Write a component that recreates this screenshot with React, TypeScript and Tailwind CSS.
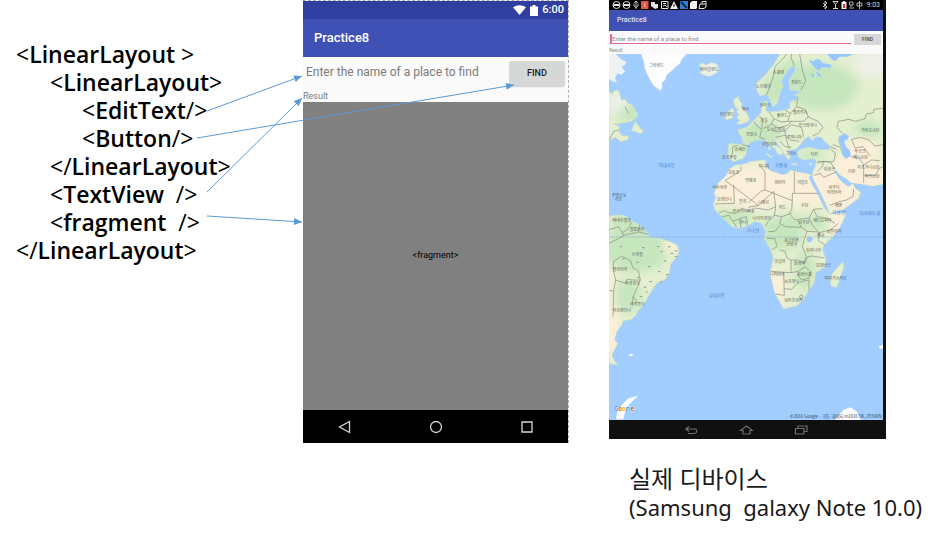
import type { ReactNode } from "react";

const land = {
  eurasia:
    "M370 285L376 280L415 285L413 268L398 240L425 232L445 212L460 198L470 185L468 160L485 152L490 166L480 180L492 186L520 184L540 180L555 174L554 158L565 150L572 156L578 142L570 134L595 126L576 122L555 120L552 94L563 72L572 60L566 45L550 60L538 76L528 95L535 108L524 130L518 158L504 170L495 150L488 135L478 134L465 138L455 120L455 98L480 75L505 45L525 12L834 12L834 402L805 408L765 401L738 398L727 388L705 374L694 360L688 364L700 384L715 400L730 411L744 402L750 415L767 427L760 445L740 460L715 478L674 490L666 470L655 445L640 415L627 390L622 376L630 352L635 330L620 325L596 331L580 320L576 305L590 297L615 292L645 300L675 298L675 288L660 275L650 262L632 260L622 272L612 258L598 268L586 284L575 296L560 300L545 302L556 320L550 330L536 310L524 290L510 275L498 262L504 274L516 288L536 302L530 316L518 312L510 296L494 286L480 270L455 270L438 276L424 290L424 312L412 326L397 331L385 335L370 322Z",
  africa:
    "M390 345L410 344L436 335L470 330L483 332L480 350L496 362L516 369L532 375L546 372L556 361L572 365L605 371L618 376L610 382L620 402L634 426L646 450L656 470L665 484L676 493L720 488L722 494L705 530L684 560L667 575L655 590L653 600L663 630L660 650L631 670L627 700L606 730L590 755L574 768L535 776L527 760L510 730L495 670L505 625L495 595L477 565L482 545L470 520L450 514L430 526L405 535L380 530L350 500L330 480L325 465L333 440L328 430L340 400L365 376L372 360Z",
  southAmerica:
    "M12 498L40 495L60 497L75 510L100 522L120 540L130 555L135 563L160 565L195 575L217 586L222 605L215 622L197 642L193 670L180 690L155 700L132 735L116 765L100 780L92 797L80 808L55 812L50 825L35 845L28 870L38 880L28 900L20 915L30 935L38 945L12 940Z",
  labrador:
    "M12 125L20 132L28 122L40 120L45 135L50 152L60 147L68 160L82 165L90 180L98 192L92 205L75 215L50 220L25 222L45 230L40 242L52 258L68 257L72 266L50 276L30 262L12 272Z",
  newfoundland: "M80 242L90 214L100 227L116 246L105 251L92 245Z",
  britain:
    "M385 150L400 139L402 150L412 160L408 170L418 180L428 195L433 205L430 215L405 223L395 220L405 210L395 205L402 195L395 185L400 178L390 170Z",
  ireland: "M372 182L382 174L388 185L385 202L365 210L357 200Z",
  iceland: "M283 45L290 39L303 46L320 38L335 42L341 55L335 68L315 79L297 76L285 68L295 60Z",
  madagascar: "M713 635L717 650L695 712L678 708L676 692L682 670Z",
};

const landOutline = Object.values(land).join("");

const ice = [
  "M108 12L118 38L118 50L125 70L133 85L140 98L147 108L167 122L172 112L170 100L180 90L185 75L203 60L215 48L225 40L230 28L245 12Z",
  "M33 1108L38 1080L55 1060L70 1045L100 1037L84 1052L70 1066L60 1085L55 1108Z",
  "M690 1110L705 1092L715 1080L735 1072L755 1084L768 1110Z",
  "M70 913L82 911L84 917L74 919Z",
  "M822 888L834 885L834 896L824 896Z",
];

const water = [
  "M610 28L622 34L640 26L655 40L680 44L676 54L652 52L642 62L626 50Z",
  "M665 12L745 12L728 20L704 20L690 34L680 28Z",
  "M632 64L644 70L650 82L640 80Z",
  "M616 68L628 76L622 84Z",
  "M700 262L718 250L732 258L728 268L718 272L722 290L734 300L738 318L722 326L710 312L712 296L702 282Z",
  "M606 562L618 560L624 568L614 578L606 574Z",
];

const borders =
  "M398 287L384 290L380 325M413 284L436 290M446 214L456 228L470 238L464 262L480 268M462 200L474 206L470 236M492 186L506 206L500 222L474 236M506 206L530 216L548 214L556 190L540 180M500 222L520 234L548 226L560 214L548 214M556 190L575 170L600 178L610 200L596 214L560 214M575 170L578 140M606 200L640 214L654 232L640 250L622 258M560 224L590 232L596 262M500 240L520 246L540 242L560 224M512 262L540 256L556 270L582 274M540 242L544 266L552 296M526 274L540 290L560 292M485 135L494 110L505 80L510 50L530 30L545 12M568 46L558 24L560 12M584 12L592 60L602 92L588 120M678 298L692 310L686 334L676 336L640 334M636 338L656 334L652 350L636 366M656 334L676 336L690 358M684 284L706 292L710 304M676 290L694 298M834 175L806 178L806 188L784 192L780 206L752 214L732 208L700 214L696 232L712 250M740 268L766 262L792 270L810 288L834 284M740 268L750 294L774 290L796 318M738 320L764 326L776 344L776 398M776 344L800 330L824 332M776 376L812 376L822 356L834 350M626 376L646 370L656 382L694 366M674 466L700 456L724 450L744 440L746 416M568 366L568 430L640 430M568 430L562 430L562 452L480 420L480 366L470 352M480 420L468 424L430 458M408 350L408 362L360 392M360 392L386 410L460 466L430 472M386 404L388 460L330 462M460 466L506 424L512 470L490 480L450 474L430 484L410 474L394 490L370 488M562 452L560 480L552 490L570 510L612 504L626 478L652 476M512 470L508 496L490 514L480 530M508 496L530 500L560 490M530 500L524 520L540 530L590 532L578 512M612 504L624 528L642 548L676 540L700 520M626 478L636 500L664 504L690 520M590 532L606 544L600 562L592 590L604 620L596 640M606 544L640 546M642 548L640 572L662 586M490 545L510 544L524 526M485 565L510 566L516 590L500 600M524 600L540 604L546 624L558 630M558 630L558 668L496 664M558 630L580 630L600 640L606 622L622 618L658 624M558 668L580 664L600 650L616 664L612 684L590 690L576 672M536 668L538 736L512 732M538 716L560 718L576 700L592 694L612 690L612 724M584 738L592 734L594 744L586 748ZM352 500L372 496L384 514L394 530M384 514L404 506L408 534M404 506L424 500L428 526M342 488L362 482L370 490M12 540L40 530L52 548L70 536L80 516M52 548L56 556L100 546L104 524M100 546L128 552M12 580L40 566L56 556M26 634L50 618L76 632L84 654L100 662L106 690L90 728L84 740L100 760M26 634L24 656L32 690L26 722L24 800M32 690L62 700L66 688L84 690L106 690M84 740L82 766M12 272L26 244L40 240M60 170L70 190";

type MapLabel = [text: string, x: number, y: number];

const places: MapLabel[] = [
  ["그린란드", 155, 52], ["아이슬란드", 313, 63], ["영국", 421, 182], ["아일랜드", 366, 199],
  ["프랑스", 440, 259], ["스페인", 405, 303], ["포르투갈", 373, 326], ["모로코", 386, 372],
  ["서사하라", 344, 416], ["모리타니", 358, 453], ["말리", 413, 460], ["알제리", 437, 395],
  ["부르키나파소", 416, 488], ["푸에르토", 42, 440], ["리코", 40, 454], ["베네수엘라", 50, 515],
  ["가나", 414, 522], ["스웨덴", 520, 71], ["노르웨이", 475, 114], ["핀란드", 575, 103],
  ["덴마크", 480, 170], ["독일", 477, 215], ["폴란드", 532, 202], ["벨라루스", 585, 192],
  ["우크라이나", 608, 232], ["오스트리아", 512, 243], ["루마니아", 568, 266], ["이탈리아", 493, 287],
  ["그리스", 558, 315], ["터키", 628, 319], ["카자흐스탄", 796, 245], ["투르크", 765, 310],
  ["메니스탄", 767, 326], ["이란", 740, 368], ["이라크", 673, 362], ["아프가니스탄", 790, 356],
  ["파키스탄", 802, 383], ["튀니지", 477, 353], ["리비아", 524, 402], ["이집트", 593, 402],
  ["사우디", 687, 418], ["아라비아", 687, 432], ["니제르", 476, 462], ["차드", 532, 477],
  ["수단", 599, 470], ["예멘", 700, 472], ["나이지리아", 470, 510], ["에티오피아", 652, 515],
  ["남수단", 597, 523], ["소말리아", 687, 550], ["케냐", 646, 562], ["콩고민주", 560, 575],
  ["공화국", 560, 589], ["탄자니아", 626, 605], ["앙골라", 525, 640], ["잠비아", 583, 645],
  ["모잠비크", 655, 651], ["짐바브웨", 598, 679], ["나미비아", 517, 679], ["보츠와나", 560, 700],
  ["마다가스카르", 692, 691], ["남아프리카", 565, 755], ["콜롬비아", 96, 543], ["브라질", 97, 617],
  ["볼리비아", 45, 664], ["파라과이", 82, 705], ["우루과이", 97, 768], ["아르헨티나", 50, 785],
];

const seas: MapLabel[] = [
  ["북대서양", 185, 351], ["남대서양", 335, 741], ["지중해", 528, 352],
  ["아덴 만", 702, 492], ["아라비아 해", 794, 495], ["기니 만", 443, 546],
];

const towns = [
  [47, 590], [115, 593], [160, 590], [193, 590], [97, 637], [133, 650], [163, 665],
  [137, 695], [180, 633], [201, 610], [187, 674], [120, 712], [170, 605], [213, 603],
  [213, 620], [108, 740], [55, 626], [168, 696], [126, 726], [100, 682], [18, 722],
];

const forests = [
  [650, 110, 110, 70], [560, 90, 50, 60], [70, 190, 40, 30], [500, 120, 25, 50],
  [90, 600, 100, 70], [530, 560, 60, 40], [470, 250, 60, 40], [560, 520, 90, 22],
  [385, 505, 60, 24], [790, 240, 40, 30], [60, 740, 50, 50], [600, 660, 30, 60],
  [70, 520, 60, 30], [400, 290, 30, 20], [620, 315, 40, 14], [640, 520, 30, 24],
];

const deserts = [
  [450, 410, 150, 62], [600, 410, 90, 60], [700, 420, 70, 55], [740, 360, 60, 50],
  [800, 380, 50, 40], [770, 300, 50, 40], [700, 510, 30, 40], [516, 710, 22, 50],
  [16, 830, 26, 90], [14, 700, 18, 60], [196, 590, 24, 18], [365, 400, 50, 50],
];

function WorldMap() {
  return (
    <svg
      viewBox="12 12 822 1098"
      preserveAspectRatio="none"
      className="h-[366px] w-full bg-[#a2cdff] font-['Noto_Sans_CJK_KR',sans-serif]"
      role="img"
      aria-label="World map"
    >
      <defs>
        <clipPath id="land"><path d={landOutline} /></clipPath>
        <filter id="soft" x="-30%" y="-30%" width="160%" height="160%"><feGaussianBlur stdDeviation="12" /></filter>
      </defs>
      <path d="M12 12L32 12L48 28L64 35L60 45L50 50L60 65L48 75L38 70L30 85L36 100L12 88Z" fill="#eef2f2" />
      <path d={landOutline} fill="#e4efd0" stroke="#cfdcc0" strokeWidth="2" />
      <g clipPath="url(#land)">
        <g filter="url(#soft)">
          {forests.map(([x, y, rx, ry]) => (
            <ellipse key={`${x}-${y}`} cx={x} cy={y} rx={rx} ry={ry} fill="#c6e6bd" />
          ))}
          {deserts.map(([x, y, rx, ry]) => (
            <ellipse key={`${x}-${y}`} cx={x} cy={y} rx={rx} ry={ry} fill="#fcefd9" />
          ))}
          <ellipse cx="810" cy="40" rx="60" ry="40" fill="#eef0ea" />
          <ellipse cx="312" cy="58" rx="36" ry="26" fill="#edf1e8" />
          <ellipse cx="30" cy="160" rx="34" ry="30" fill="#eaf0e6" />
        </g>
      </g>
      {ice.map((d) => <path key={d} d={d} fill="#fdfdfd" />)}
      {water.map((d) => <path key={d} d={d} fill="#98c8fd" />)}
      <path d="M490 288L494 300M484 310L500 322M560 342L576 344M612 344L622 340" stroke="#dcebc6" strokeWidth="5" />
      <path d={borders} fill="none" stroke="#8d8f86" strokeWidth="2.5" strokeLinejoin="round" opacity=".85" />
      <path d="M12 561H834" stroke="#8098c4" strokeWidth="2" strokeDasharray="4 3" />
      {towns.map(([x, y]) => (
        <path key={`${x}-${y}`} d={`M${x - 4} ${y}h8`} stroke="#8f9c89" strokeWidth="3" />
      ))}
      <g fontSize="12" textAnchor="middle" fill="#5a5a54">
        {places.map(([text, x, y]) => <text key={text} x={x} y={y}>{text}</text>)}
      </g>
      <g fontSize="13" textAnchor="middle" fill="#4c82c4">
        {seas.map(([text, x, y]) => <text key={text} x={x} y={y}>{text}</text>)}
      </g>
      <text x="28" y="1082" fontSize="17" fontWeight="700" stroke="#ffffff" strokeWidth="2" paintOrder="stroke">
        <tspan fill="#4285f4">G</tspan><tspan fill="#ea4335">o</tspan><tspan fill="#fbbc05">o</tspan><tspan fill="#4285f4">g</tspan><tspan fill="#34a853">l</tspan><tspan fill="#ea4335">e</tspan>
      </text>
      <text x="830" y="1103" fontSize="13" textAnchor="end" fill="#34424f">
        ©2016 Google · 지도 데이터 ©2016 SK, ZENRIN
      </text>
    </svg>
  );
}

function Tag({ open = "<", name, close = ">", indent = "" }: { open?: string; name: string; close?: string; indent?: string }) {
  return (
    <div className={indent}>
      {open}<b className="font-semibold">{name}</b>{close}
    </div>
  );
}

function LayoutOutline() {
  return (
    <section className="pt-10 pl-4 font-['Open_Sans','Noto_Sans',sans-serif] text-[23px] leading-7 whitespace-pre text-black">
      <Tag name="LinearLayout" close=" >" />
      <Tag name="LinearLayout" indent="pl-[34px]" />
      <Tag name="EditText" close="/>" indent="pl-[66px]" />
      <Tag name="Button" close="/>" indent="pl-[66px]" />
      <Tag open="</" name="LinearLayout" indent="pl-[34px]" />
      <Tag name="TextView" close="  />" indent="pl-[34px]" />
      <Tag name="fragment" close="  />" indent="pl-[34px]" />
      <Tag open="</" name="LinearLayout" />
    </section>
  );
}

function PhonePreview() {
  return (
    <section className="flex flex-col self-start border-t border-r border-dashed border-[#b0b0b0] font-[Roboto,sans-serif]">
      <div className="flex h-[18px] items-center justify-end gap-1 bg-[#303f9f] pr-1 text-[11px] font-medium text-white">
        <svg viewBox="0 0 13 10" className="h-[10px] w-[13px]" fill="currentColor"><path d="M0 2.3Q6.500-2 13 2.300L6.500 10Z" /></svg>
        <svg viewBox="0 0 8 11" className="h-[11px] w-2" fill="currentColor"><path d="M0 1.500H2.500V0H5.500V1.500H8V11H0Z" /></svg>
        <span>6:00</span>
      </div>
      <h1 className="flex h-[38px] items-center bg-[#3f51b5] pl-[11px] text-[13px] font-medium text-white">Practice8</h1>
      <div className="flex h-[34px] items-center bg-[#fafafa] pr-[3px] pl-[3px]">
        <input
          aria-label="Place name"
          placeholder="Enter the name of a place to find"
          className="min-w-0 flex-1 bg-transparent pb-1 text-[12px] leading-4 outline-none placeholder:text-[#7c7c7c] placeholder:opacity-100"
        />
        <button className="h-[26px] w-14 rounded-xs bg-[#d6d7d7] text-[9px] font-medium text-[#1c1c1c] shadow-xs">FIND</button>
      </div>
      <p className="h-[11px] bg-[#fafafa] text-[9px] leading-[11px] text-[#7c7c7c]">Result</p>
      <div className="flex h-[308px] items-center justify-center bg-[#808080] text-[9px] text-black">&lt;fragment&gt;</div>
      <nav className="flex h-[33px] items-center justify-center gap-[69px] bg-black text-[#d8d8d8]">
        <NavButton label="Back"><path d="M11.500 1.500V12.500L1.500 7Z" /></NavButton>
        <NavButton label="Home"><circle cx="7" cy="7" r="5.500" /></NavButton>
        <NavButton label="Overview"><path d="M2 2H12V12H2Z" /></NavButton>
      </nav>
    </section>
  );
}

function NavButton({ label, children }: { label: string; children: ReactNode }) {
  return (
    <button aria-label={label} className="p-1">
      <svg viewBox="0 0 14 14" className="size-[14px]" fill="none" stroke="currentColor" strokeWidth="1.300">{children}</svg>
    </button>
  );
}

function TabletStatusBar() {
  return (
    <div className="flex h-[10px] items-center justify-between bg-black pr-[3px] pl-[3px] text-[7px] leading-[10px] text-[#d8d8d8]">
      <svg viewBox="0 0 95 10" className="h-[10px] w-[95px]" fill="none" stroke="#e4e4e4">
        <circle cx="4.500" cy="5" r="3.500" /><path d="M1.500 5H7.500" strokeWidth="2" />
        <circle cx="14.500" cy="5" r="3.500" /><path d="M11.500 5H17.500" strokeWidth="2" />
        <path d="M24 1V9M22 3.500L24 1L26 3.500M22 4V6L24 7.500L26 6V4" strokeWidth=".8" />
        <path d="M29 1H36.500V9H29Z" fill="#e2573f" stroke="none" /><path d="M32.800 3V7" stroke="#f7b9ad" />
        <path d="M39 2H43V4H46V8L43 9L39 6Z" fill="#e4e4e4" stroke="none" />
        <path d="M49.500 1.500H56V8.500H49.500ZM51 3.500H54M51 6L53 5L55 7" />
        <path d="M62 1L66 9H58Z" fill="#f2f2f2" stroke="none" /><path d="M62 4V7" stroke="#111111" />
        <path d="M68 1H76V9H68Z" fill="#2f7fd8" stroke="none" /><path d="M69 2L75 8" stroke="#0e2748" strokeWidth="2" />
        <path d="M80 1H85V8L84 9H78V3Z" fill="#f2f2f2" stroke="none" />
        <path d="M88 4H94V7L92 8.500H87ZM90 4V1.500H94V4" />
      </svg>
      <div className="flex items-center gap-[3px]">
        <svg viewBox="0 0 42 10" className="h-[10px] w-[42px]" fill="none" stroke="#d8d8d8">
          <path d="M1 3L5 7L3 9V1L5 3L1 7" strokeWidth=".9" />
          <path d="M11 1.500H16L13.500 4.500ZM13.500 4V9M11 8.500H16" />
          <path d="M19.500 2H21V1H23V2H24.500V9H19.500Z" fill="#f0f0f0" stroke="none" /><path d="M22 4V8" stroke="#e03428" strokeWidth="2" />
          <path d="M27.500 2H31V5H27.500ZM29 5V7M27 8H32M35 3H40V6H35ZM37.500 1V9" strokeWidth=".8" />
        </svg>
        <span>9:03</span>
      </div>
    </div>
  );
}

function TabletPreview() {
  return (
    <section className="mr-[54px] bg-[#101010] pr-[3px] font-[Roboto,sans-serif]">
      <TabletStatusBar />
      <h2 className="flex h-[21px] items-center bg-[#3f51b5] pl-2 text-[7px] font-medium text-[#dfe3f6]">Practice8</h2>
      <div className="flex h-4 items-start gap-[3px] bg-[#fafafa] pt-[3px] pr-[2px] pl-px">
        <input
          aria-label="Place name"
          placeholder="Enter the name of a place to find"
          className="h-[10px] min-w-0 flex-1 border-b border-l-2 border-b-[#e26a9c] border-l-[#e26a9c] bg-transparent text-[6px] leading-[9px] outline-none placeholder:text-[#8b8b8b] placeholder:opacity-100"
        />
        <button className="h-[11px] w-[27px] bg-[#d6d7d7] text-[5px] leading-[11px] font-medium text-[#4a4a4a]">FIND</button>
      </div>
      <p className="h-[7px] bg-[#fafafa] text-[5px] leading-[7px] text-[#8b8b8b]">Result</p>
      <WorldMap />
      <nav className="flex h-[19px] items-center justify-center gap-[34px] text-[#6d6d6d]">
        <TabletNavButton label="Back"><path d="M5 1.500L2 4H12Q14 8 10 8.500H4M2 4L5 6.500" /></TabletNavButton>
        <TabletNavButton label="Home"><path d="M1.500 5.500L7.500 1L13.500 5.500H11V9H4V5.500Z" /></TabletNavButton>
        <TabletNavButton label="Recent apps"><path d="M1.500 3.500H10V9H1.500ZM4 3.500V1H13V6.500H10" /></TabletNavButton>
      </nav>
    </section>
  );
}

function TabletNavButton({ label, children }: { label: string; children: ReactNode }) {
  return (
    <button aria-label={label} className="px-[3px]">
      <svg viewBox="0 0 15 10" className="h-[10px] w-[15px]" fill="none" stroke="currentColor" strokeWidth="1.200">{children}</svg>
    </button>
  );
}

function Connectors() {
  return (
    <svg
      viewBox="0 0 940 535"
      preserveAspectRatio="none"
      className="pointer-events-none absolute inset-0 h-full w-full"
      fill="none"
      stroke="#5b9bd5"
      aria-hidden="true"
    >
      <defs>
        <marker id="head" viewBox="0 0 8 7" refX="8" refY="3.500" markerWidth="8" markerHeight="7" markerUnits="userSpaceOnUse" orient="auto">
          <path d="M0 0L8 3.500L0 7Z" fill="#5b9bd5" stroke="none" />
        </marker>
      </defs>
      <path d="M207 111L302 76" markerEnd="url(#head)" />
      <path d="M197 138L514 85" markerEnd="url(#head)" />
      <path d="M207 192L302 98" markerEnd="url(#head)" />
      <path d="M207 216L302 222" markerEnd="url(#head)" />
    </svg>
  );
}

export default function App() {
  return (
    <main className="relative grid min-h-screen grid-cols-[303fr_266fr_371fr] bg-white">
      <LayoutOutline />
      <PhonePreview />
      <section className="pl-10">
        <TabletPreview />
        <p className="pt-[26px] pl-5 font-['Noto_Sans','Noto_Sans_CJK_KR',sans-serif] text-[22px] leading-7 whitespace-pre text-[#1a1a1a]">
          <span className="text-2xl leading-7">실제 디바이스</span>
          <br />
          {"(Samsung  galaxy Note 10.0)"}
        </p>
      </section>
      <Connectors />
    </main>
  );
}
